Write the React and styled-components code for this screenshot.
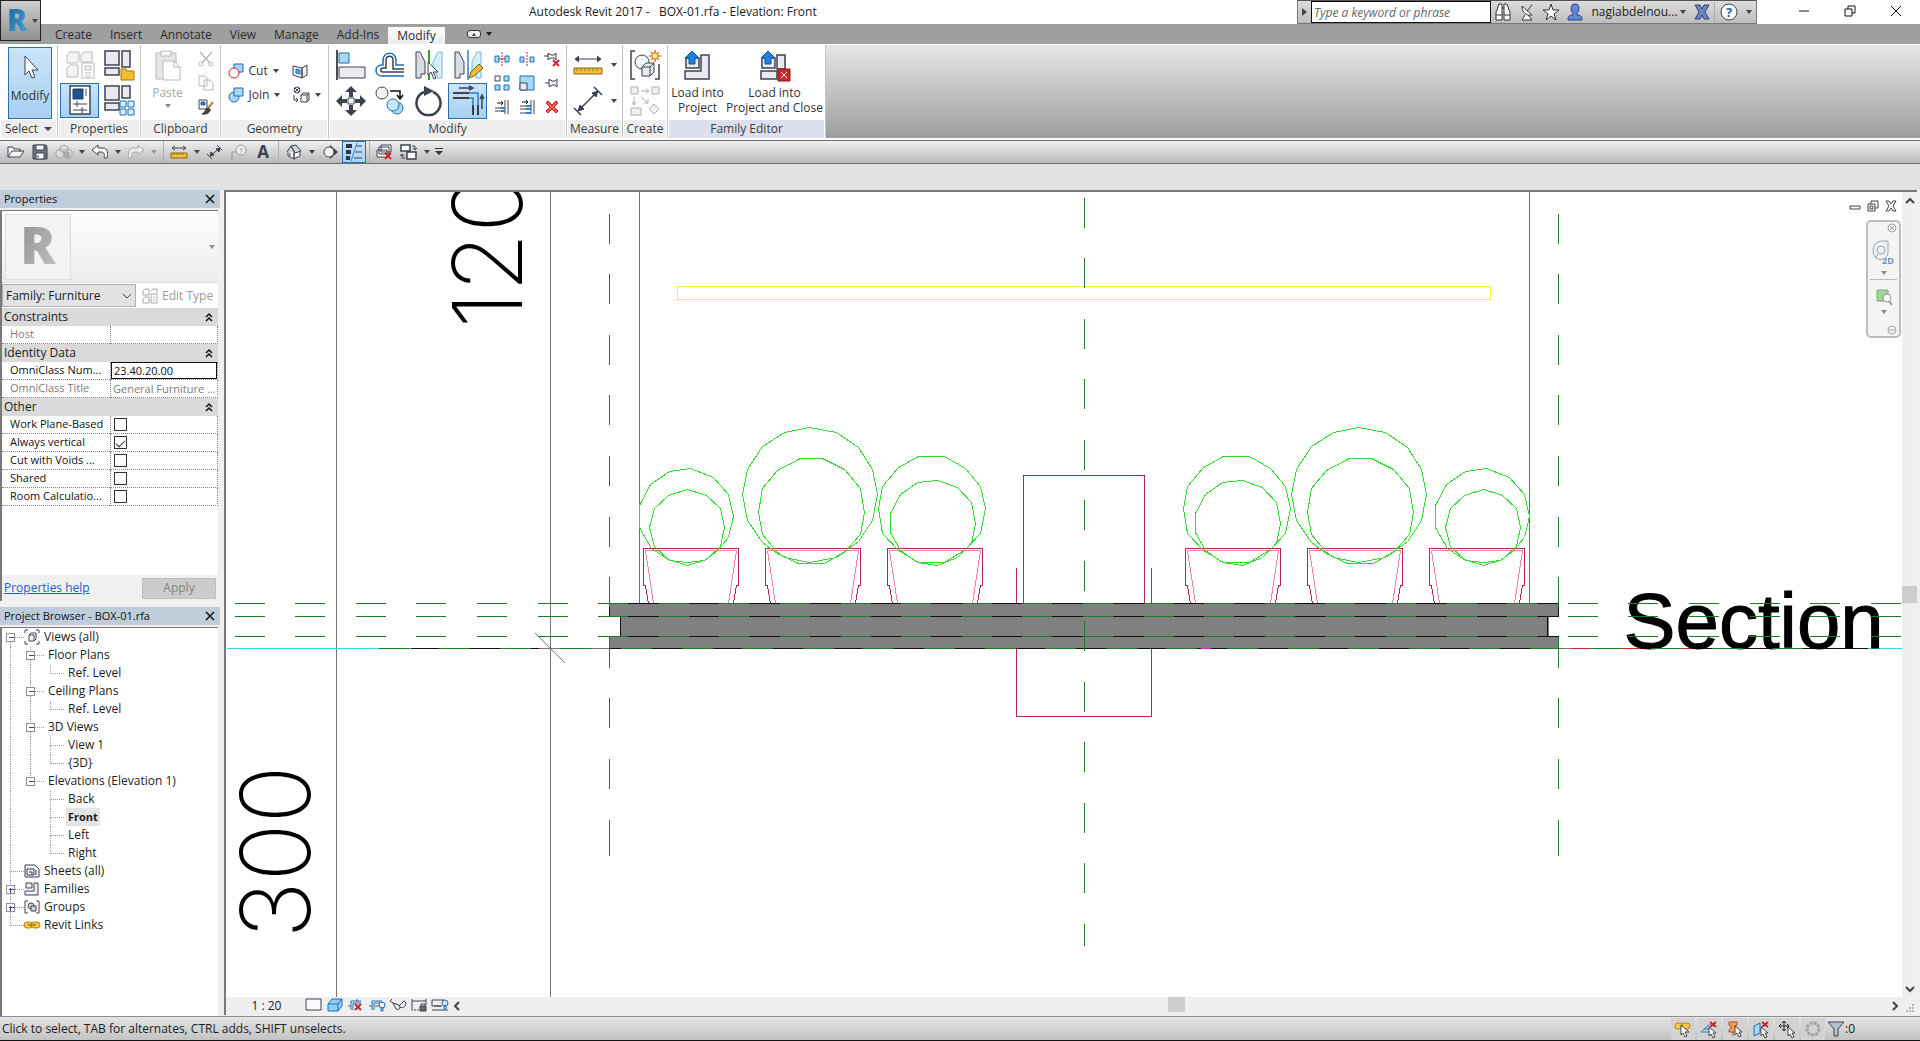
import React from "react";
import styled, { createGlobalStyle, css } from "styled-components";

/* ---------- Icons ---------- */

const INK = "#3c4350";
const BLUE = "#1f6fb8";
const SKY = "#a9d8f5";

const ICONS = {
  cursor: [30, 30, <path d="M10 2v19l4-4 3 7 3-1-3-7h6z" fill="#fff" stroke={INK} />],
  typeProps: [30, 30, (
    <g fill="#f4f4f4" stroke="#b9b9b9">
      <path d="M2 5l3-3h9v9l-3 2H2zM16 5l3-3h8v10H16zM2 18l3-3h8v12H2z" />
      <path d="M17 13h12v15H17z" fill="#fff" />
      <path d="M20 16h6v4h-6zM20 23h6M20 26h6" />
    </g>
  )],
  familyFolder: [30, 30, (
    <g stroke={INK} fill="#e9ebf0">
      <path d="M1 1h14v14H1zM18 1h8v16h-8zM1 18h14v7H1z" strokeWidth="1.5" />
      <path d="M17 19h5l1 2h7v9H17z" fill="#f5bd2c" stroke="#a67610" />
    </g>
  )],
  properties: [24, 30, (
    <g stroke={INK} fill="#fff">
      <path d="M2 1h20v28H2z" strokeWidth="1.5" />
      <path d="M5 4h10v10H5z" fill="#1e528c" stroke="#16406f" />
      <path d="M18 4v7" stroke="#9aa3b0" strokeWidth="2" />
      <path d="M5 19h14M5 25h14M9 16v6M14 22v6" />
    </g>
  )],
  familyTypes: [30, 30, (
    <g stroke={INK} fill="#e9ebf0">
      <path d="M1 1h14v14H1zM18 1h8v12h-8zM1 18h14v7H1z" strokeWidth="1.5" />
      <path d="M16 16h6v6h-6zM24 16h6v6h-6zM16 24h6v6h-6zM24 24h6v6h-6z" fill="#d8effc" stroke={BLUE} />
    </g>
  )],
  paste: [28, 32, (
    <g stroke="#b9b9b9" fill="#e6e6e6">
      <path d="M2 4h20v26H2z" />
      <path d="M7 2h10v5H7z" fill="#f8f8f8" />
      <path d="M9 12h11l6 6v13H9z" fill="#fff" />
      <path d="M20 12v6h6" fill="none" />
    </g>
  )],
  scissors: [16, 16, (
    <g stroke="#b9b9b9" fill="none">
      <path d="M2 1l10 11M14 1L4 12" strokeWidth="1.5" />
      <circle cx="3" cy="13" r="2" /><circle cx="13" cy="13" r="2" />
    </g>
  )],
  copyGrey: [16, 16, (
    <g stroke="#b9b9b9" fill="#fff">
      <path d="M1 1h6l2 2v8H1zM6 5h6l3 3v7H6z" />
    </g>
  )],
  matchType: [16, 16, (
    <g stroke={INK}>
      <path d="M1 1h8v9H1z" fill="#fff" />
      <path d="M3 3h4v3H3z" fill="#2b6cb0" stroke="#2b6cb0" />
      <path d="M15 3l-5 6" stroke="#b28b3d" strokeWidth="2" />
      <path d="M10 9c-3 0-2 4-6 6 5 1 9-2 8-5z" fill="#444" />
    </g>
  )],
  cut: [16, 16, (
    <g>
      <path d="M6 1h9v8H6z" fill={SKY} stroke={BLUE} />
      <circle cx="6" cy="10" r="5" fill="#fff" stroke="#c0272d" />
    </g>
  )],
  join: [16, 16, (
    <g fill={SKY} stroke={BLUE}>
      <circle cx="6" cy="10" r="5" />
      <path d="M6 1h9v8H6z" />
    </g>
  )],
  splitFace: [16, 16, (
    <g stroke={INK} fill="#eef1f6">
      <path d="M1 3l9 2v10l-9-3zM10 5l5-3v10l-5 3z" />
      <path d="M4 6l4 1v4l-4-1z" fill="#5ba4dd" stroke={BLUE} />
    </g>
  )],
  paint: [18, 17, (
    <g stroke={INK} fill="none">
      <circle cx="5" cy="4" r="3" /><path d="M3 2l4 4M7 2L3 6M2 9v5h4M4 12l2 2-2 2" />
      <path d="M9 9l2-2h6v7l-2 2H9zM9 9h6v7M15 9l2-2" fill="#f4f5f8" />
    </g>
  )],
  align: [30, 30, (
    <g>
      <path d="M1 0v30" stroke="#111" strokeWidth="1.5" />
      <path d="M3 3h10v10H3z" fill={SKY} stroke={BLUE} />
      <path d="M3 17h26v11H3z" fill="#e9ebf0" stroke={INK} />
    </g>
  )],
  offset: [30, 28, (
    <g fill="none" strokeWidth="1.5">
      <path d="M29 25H7c-8 0-8-11 0-11h1V9c0-9 13-9 13 0v5h8" stroke={BLUE} />
      <path d="M29 21H8c-3 0-3-4 0-4h3V9c0-5 7-5 7 0v9h11" stroke={INK} />
    </g>
  )],
  mirrorPick: [30, 30, (
    <g>
      <path d="M2 2h4l5 10v12H7v4H2z" fill="#d9dce3" stroke={INK} />
      <path d="M28 2h-4l-5 10v12h4v4h5z" fill="#d6effc" stroke="#7fb4d8" />
      <path d="M15 0v30" stroke="#2ea02e" strokeWidth="2" />
      <path d="M14 12v13l3-3 3 7 2-1-3-6h5z" fill="#fff" stroke={INK} />
    </g>
  )],
  mirrorDraw: [30, 30, (
    <g>
      <path d="M2 2h4l5 10v12H7v4H2z" fill="#d9dce3" stroke={INK} />
      <path d="M28 2h-4l-5 10v12h4v4h5z" fill="#d6effc" stroke="#7fb4d8" />
      <path d="M15 0v30" stroke="#2d7fd0" strokeWidth="1.5" />
      <path d="M16 28l2-6 8-8 4 4-9 8z" fill="#f4be3b" stroke="#7a5510" />
    </g>
  )],
  move: [30, 30, (
    <g fill={INK}>
      <path d="M15 0l6 6h-4v5h-4V6H9zM15 30l6-6h-4v-5h-4v5H9zM0 15l6-6v4h5v4H6v4zM30 15l-6-6v4h-5v4h5v4z" />
      <path d="M12 12h6v6h-6z" fill="#fff" stroke={INK} />
    </g>
  )],
  copy: [30, 30, (
    <g>
      <circle cx="7" cy="7" r="6" fill="#f1f2f5" stroke={INK} />
      <path d="M15 5h10v7M22 9l3 4 3-4" fill="none" stroke="#111" strokeWidth="1.5" />
      <circle cx="22" cy="22" r="6" fill={SKY} stroke={BLUE} />
      <circle cx="18" cy="19" r="6" fill="#c6e7f9" stroke={BLUE} />
    </g>
  )],
  rotate: [30, 30, (
    <g>
      <path d="M19 6A12 12 0 1 1 10 6" fill="none" stroke={INK} strokeWidth="2.5" />
      <path d="M10 0l10 5-10 5z" fill={INK} />
    </g>
  )],
  trim: [32, 30, (
    <g fill="none" strokeWidth="1.5">
      <path d="M1 7h16M1 12h16M21 19v10M26 19v10" stroke="#111" />
      <path d="M17 7h9v12M17 12h4v7" stroke="#2d7fd0" />
      <path d="M7 2h13M17 0l4 2-4 2M30 23V10M28 13l2-4 2 4" stroke={INK} />
    </g>
  )],
  split: [16, 16, (
    <g>
      <path d="M1 5h4v6H1zM11 5h4v6h-4z" fill={SKY} stroke={BLUE} />
      <path d="M8 1v14" stroke="#c0272d" strokeDasharray="2 1" /><path d="M5 8h6" stroke="#c0272d" />
    </g>
  )],
  splitGap: [16, 16, (
    <g>
      <path d="M1 6h4v5H1zM11 6h4v5h-4z" fill={SKY} stroke={BLUE} />
      <path d="M8 1v14" stroke="#c0272d" strokeDasharray="2 1" />
    </g>
  )],
  unpin: [16, 16, (
    <g>
      <path d="M0 5h4M4 2v7M4 3h2l1 1h3l2-2v7l-2-2H7L6 8H4" fill="#f0f0f0" stroke={INK} />
      <path d="M9 9l6 6M15 9l-6 6" stroke="#d0252b" strokeWidth="2" />
    </g>
  )],
  pin: [16, 16, <path d="M1 8h4M5 4v8M5 5h2l1 1h3l2-2v8l-2-2H8l-1 1H5" fill="#f0f0f0" stroke={INK} />],
  array: [16, 16, (
    <g stroke={BLUE} fill={SKY}>
      <path d="M1 1h5v5H1z" fill="#fff" stroke={INK} /><path d="M10 1h5v5h-5zM1 10h5v5H1zM10 10h5v5h-5z" />
    </g>
  )],
  scale: [16, 16, (
    <g>
      <path d="M1 1h14v14H1z" fill={SKY} stroke={BLUE} /><path d="M1 8h7v7H1z" fill="#eceef2" stroke={INK} />
    </g>
  )],
  trimOne: [16, 16, (
    <g fill="none">
      <path d="M11 1v14M14 1v14M1 9h6M1 12h6" stroke={INK} /><path d="M7 9h4M7 12h4" stroke="#2d7fd0" strokeWidth="2" />
      <path d="M3 4h6M7 2l2 2-2 2" stroke="#111" />
    </g>
  )],
  trimMany: [16, 16, (
    <g fill="none">
      <path d="M12 1v14M15 1v14M1 7h6M1 10h6M1 14h6" stroke={INK} /><path d="M7 7h5M7 10h5M7 14h5" stroke="#2d7fd0" strokeWidth="2" />
      <path d="M3 3h6M7 1l2 2-2 2" stroke="#111" />
    </g>
  )],
  remove: [16, 16, <path d="M2 4l2-2 4 4 4-4 2 2-4 4 4 4-2 2-4-4-4 4-2-2 4-4z" fill="#f2604a" stroke="#b81f1f" />],
  measure: [30, 28, (
    <g>
      <path d="M3 8h24M6 5L2 8l4 3M24 5l4 3-4 3" stroke={INK} fill={INK} />
      <path d="M1 17h28v6H1z" fill="#f4be3b" stroke="#8c6512" />
      <path d="M4 17v3M8 17v3M12 17v3M16 17v3M20 17v3M24 17v3" stroke="#8c6512" />
    </g>
  )],
  dimension: [30, 30, (
    <g stroke={INK} fill={INK}>
      <path d="M6 24L24 6M1 22l7 7M21 1l8 8" strokeWidth="1.5" /><path d="M5 25l2-6 4 4zM25 5l-6 2 4 4z" />
    </g>
  )],
  group: [30, 30, (
    <g stroke={INK} fill="none">
      <path d="M5 1H1v28h4M25 29h4V14" strokeWidth="1.5" />
      <circle cx="12" cy="12" r="7" fill="#f4f5f8" />
      <path d="M12 17l4-4h8v9l-4 4h-8zM12 17h8v9M20 17l4-4" fill="#e9ebf0" />
      <path d="M25 0v12M19 6h12M21 2l8 8M29 2l-8 8" stroke="#e8731a" strokeWidth="1.5" />
      <circle cx="25" cy="6" r="3" fill="#fff3a8" stroke="#e8731a" />
    </g>
  )],
  similar: [30, 30, (
    <g stroke="#b0b0b0" fill="#f1f1f1">
      <path d="M1 1h7v7H1zM22 1h7v7h-7zM1 22h10v7H1zM24 18l5 5-5 5-5-5z" />
      <path d="M11 5h8M16 3l3 2-3 2M4 11v8M2 16l2 3 2-3M11 11l7 6M18 13v4h-4" fill="none" />
    </g>
  )],
  load: [30, 30, (
    <g stroke={INK} fill="#e9ebf0">
      <path d="M3 7h13v10H3zM18 4h8v24H2v-8h16z" strokeWidth="1.5" />
      <path d="M9 0l7 7h-4v6H6V7H2z" fill="#1d7fe0" stroke="#1459a4" />
    </g>
  )],
  loadClose: [32, 30, (
    <g stroke={INK} fill="#e9ebf0">
      <path d="M3 7h13v10H3zM18 4h8v14h-8zM2 20h16v8H2z" strokeWidth="1.5" />
      <path d="M9 0l7 7h-4v6H6V7H2z" fill="#1d7fe0" stroke="#1459a4" />
      <path d="M19 18h12v12H19z" fill="#cf2a2a" stroke="#8d1717" /><path d="M22 21l6 6M28 21l-6 6" stroke="#fff" />
    </g>
  )],
  open: [18, 16, <path d="M1 13V3h5l1 2h6v3M1 13l4-6h12l-4 6z" fill="#f6f7f9" stroke={INK} />],
  save: [16, 16, (
    <g stroke={INK}>
      <path d="M1 1h13l1 2v12H1z" fill="#6c7584" /><path d="M4 1h8v5H4z" fill="#fff" /><path d="M4 9h8v6H4z" fill="#fff" /><path d="M6 11v3" />
    </g>
  )],
  cubes: [18, 16, (
    <g stroke="#a6a6a6" fill="#dedede">
      <path d="M5 3l4-2 4 2v4l-4 2-4-2zM1 7l4-2 4 2v5l-4 2-4-2zM9 7l4-2 4 2v5l-4 3-4-3z" /><circle cx="12" cy="11" r="3" fill="#aaa" />
    </g>
  )],
  undo: [18, 16, <path d="M1 6l6-5v3h5c5 0 5 6 4 10h-3c1-4 0-6-3-6H7v3z" fill="#fff" stroke={INK} />],
  redo: [18, 16, <path d="M17 6l-6-5v3H6C1 4 1 10 2 14h3c-1-4 0-6 3-6h3v3z" fill="#ededed" stroke="#a8a8a8" />],
  ruler: [18, 16, (
    <g>
      <path d="M3 4h12M5 2L2 4l3 2M13 2l3 2-3 2" stroke={INK} fill="none" /><path d="M1 9h16v5H1z" fill="#f4be3b" stroke="#8c6512" />
      <path d="M4 9v2M7 9v2M10 9v2M13 9v2" stroke="#8c6512" />
    </g>
  )],
  aligned: [18, 16, <path d="M4 12L14 4M1 10l5 5M11 1l5 5M4 12l1-4 3 3zM14 4l-1 4-3-3z" fill={INK} stroke={INK} />],
  tag: [18, 16, (
    <g stroke="#9a9a9a" fill="none">
      <path d="M2 15V8h6" /><circle cx="2" cy="14" r="1" /><circle cx="11" cy="6" r="5" fill="#eee" />
      <text x="11" y="9" fontSize="8" textAnchor="middle" fill="#888" stroke="none">1</text>
    </g>
  )],
  textA: [16, 16, <text x="8" y="14" fontSize="17" fontWeight="700" textAnchor="middle" fill={INK}>A</text>],
  house: [18, 16, (
    <g stroke={INK} fill="#f4f5f8">
      <path d="M3 7v5l6 3V8L6 3zM9 8v7l6-3V7z" />
      <path d="M2 8l4-6 4 7M6 2l5-1 5 6-6 2z" fill="#cfd4dc" />
      <path d="M5 9v3" />
    </g>
  )],
  sectionMark: [16, 16, (
    <g><path d="M8 1l8 7-8 7z" fill={INK} /><circle cx="7" cy="8" r="5" fill="#f4f4f4" stroke={INK} /></g>
  )],
  thinLines: [18, 18, (
    <g>
      <path d="M1 3h6M1 9h5M1 15h4" stroke="#2b3647" strokeWidth="4" /><path d="M11 3h6M10 9h7M9 15h8" stroke={INK} />
      <path d="M12 0L6 18" stroke="#2d8be0" />
    </g>
  )],
  closeHidden: [18, 16, (
    <g stroke={INK} fill="#fff">
      <path d="M5 1h10v7H5zM3 3h10v7H3zM1 6h10v7H1z" /><path d="M9 9l6 6M15 9l-6 6" stroke="#d0252b" strokeWidth="2" />
    </g>
  )],
  switchWin: [18, 16, (
    <g stroke={INK} fill="#fff">
      <path d="M1 1h9v6H1zM7 8h9v7H7z" strokeWidth="1.5" /><path d="M12 2h3v4M13 4l2 2 2-2M5 14H2v-4M0 12l2-2 2 2" fill="none" />
    </g>
  )],
  customize: [8, 8, <path d="M0 0h8v1H0zM0 3h8L4 7z" fill="#333" />],
  binoculars: [16, 18, (
    <path d="M2 7l2-6h3v16H1V9zM14 7l-2-6H9v16h6V9zM7 5h2M1 12h6M9 12h6" fill="#fff" stroke="#333" />
  )],
  dish: [14, 18, (
    <path d="M2 3c0 7 5 10 10 9zM7 8l5-6M12 2l-1 0M5 12l-3 5h10l-4-5" fill="#fff" stroke="#333" />
  )],
  star: [18, 18, <path d="M9 1l2 6h6l-5 4 2 6-5-4-5 4 2-6-5-4h6z" fill="#fff" stroke="#333" />],
  user: [16, 18, (
    <path d="M8 1c-6 0-4 8-2 9v2c-3 0-5 1-5 5h14c0-4-2-5-5-5v-2c2-1 4-9-2-9z" fill="#5f86d8" stroke="#26407e" />
  )],
  exchange: [16, 16, (
    <path d="M1 1h5l2 4 2-4h5l-4 7 4 7h-5l-2-4-2 4H1l4-7z" fill="#6c87be" stroke="#27427c" />
  )],
  help: [18, 18, (
    <g>
      <circle cx="9" cy="9" r="8" fill="#fff" stroke="#444" />
      <text x="9" y="14" fontSize="13" fontWeight="700" textAnchor="middle" fill="#2f5cb4">?</text>
    </g>
  )],
  minimize: [12, 12, <path d="M1 6h10" stroke="#111" />],
  restore: [12, 12, <path d="M1 4h7v7H1zM4 4V1h7v7H8" fill="none" stroke="#111" />],
  close: [12, 12, <path d="M1 1l10 10M11 1L1 11" stroke="#111" />],
  closeBold: [10, 10, <path d="M1 1l8 8M9 1L1 9" stroke="#111" strokeWidth="1.5" />],
  viewMin: [12, 12, <path d="M1 6h10v3H1z" fill="#fff" stroke="#444" />],
  viewRestore: [12, 12, <path d="M1 4h7v7H1zM4 4V1h7v7H8M3 6h3v3H3z" fill="none" stroke="#444" />],
  viewClose: [12, 12, <path d="M1 1h3l2 3 2-3h3L8 6l3 5H8L6 8l-2 3H1l3-5z" fill="#fff" stroke="#444" />],
  wheel: [24, 28, (
    <g fill="#eef0f4" stroke="#9aa2b4">
      <path d="M1 12a9 9 0 0 1 9-10h6v10a8 8 0 0 1-6 9 9 9 0 0 1-9-9z" /><circle cx="9" cy="11" r="4" />
      <path d="M6 15l-3 4" />
      <text x="16" y="25" fontSize="9" fontWeight="700" textAnchor="middle" fill="#6f92cc" stroke="none">2D</text>
    </g>
  )],
  zoomRegion: [18, 18, (
    <g><path d="M2 2h11v11H2z" fill="#a5d29a" stroke="#7cae72" /><circle cx="12" cy="10" r="4" fill="#fff" stroke="#8a93a5" /><path d="M14 13l3 4" stroke="#8a93a5" strokeWidth="1.5" /></g>
  )],
  navClose: [10, 10, <g fill="none" stroke="#a5a5a5"><circle cx="5" cy="5" r="4" /><path d="M3 3l4 4M7 3L3 7" /></g>],
  navMenu: [10, 10, <g fill="none" stroke="#a5a5a5"><circle cx="5" cy="5" r="4" /><path d="M2 5h6" /></g>],
  collapse: [10, 12, <path d="M2 6l3-3 3 3M2 10l3-3 3 3" fill="none" stroke="#111" strokeWidth="1.5" />],
  views: [16, 16, (
    <g fill="none" stroke={INK}><path d="M4 1H1v3M12 1h3v3M1 12v3h3M15 12v3h-3M5 6l2-2h5v6l-2 2H5zM5 6h5v6" /></g>
  )],
  sheets: [16, 14, (
    <g fill="#eef0f5" stroke={INK}><path d="M1 1h10l4 4v8H1z" /><path d="M3 5h7v6H3zM5 8h3v3M12 6v5" fill="none" /></g>
  )],
  families: [16, 14, <path d="M2 1h6v5H2zM10 1h4v12H1V9h9z" fill="#eef0f5" stroke={INK} />],
  groups: [16, 14, (
    <g fill="#cfd3dc" stroke={INK}><path d="M4 1H1v12h3M12 1h3v12h-3" fill="none" /><circle cx="7" cy="6" r="3" /><path d="M7 6h5v5H7z" /></g>
  )],
  links: [18, 10, (
    <g fill="none" stroke="#b8860b"><rect x="1" y="2" width="9" height="6" rx="3" fill="#f5c842" /><rect x="8" y="2" width="9" height="6" rx="3" fill="#f5c842" /><path d="M5 5h8" stroke="#7c5a06" /></g>
  )],
  detail: [18, 14, <path d="M1 1h15v11H1z" fill="#fbfbfd" stroke={INK} />],
  visual: [16, 14, <path d="M1 6l4-5h10v7l-4 5H1zM1 6h10v7M11 6l4-5" fill="#8fcdf2" stroke={BLUE} />],
  cropOff: [18, 14, (
    <g fill="none"><path d="M1 8h3M4 12V3h10M6 12V5h8M10 1v3" stroke={BLUE} /><path d="M8 6l6 6M14 6l-6 6" stroke="#c0272d" strokeWidth="2" /></g>
  )],
  cropShow: [18, 14, (
    <g fill="none"><path d="M1 8h3M4 12V3h10M6 12V5h6" stroke={BLUE} /><circle cx="14" cy="7" r="3" fill="#e6f3fc" stroke={BLUE} /><path d="M13 10h2v3h-2z" stroke={BLUE} /><path d="M7 8h4" stroke="#c0272d" /></g>
  )],
  glasses: [18, 14, <path d="M1 3l3 2 3 6c4 2 5-3 3-4L4 5M10 8l5-5c3 1 2 5 0 6s-4 1-5-1M1 3l2-2" fill="none" stroke={INK} />],
  constraints: [18, 14, (
    <g fill="none" stroke={INK}><path d="M2 1v12M16 1v6M2 3h14" /><path d="M4 12h6" strokeDasharray="2 1" /><path d="M10 8h6v5h-6z" fill="#666" /><path d="M11 8V6h4v2" /></g>
  )],
  worksheet: [18, 14, (
    <g fill="none" stroke={INK}><path d="M1 2h12M1 2v6h10M1 12h16" /><path d="M3 8h7" /><circle cx="14" cy="5" r="3" fill="#cfe6f7" stroke={BLUE} /><path d="M13 8h2v3h-2z" stroke={BLUE} /></g>
  )],
  selLinks: [18, 18, (
    <g><rect x="1" y="3" width="8" height="6" rx="3" fill="#f5c842" stroke="#b8860b" /><rect x="8" y="3" width="8" height="6" rx="3" fill="#f5c842" stroke="#b8860b" /><path d="M7 5v10l2-2 2 4 2-1-2-4h4z" fill="#fff" stroke={INK} /></g>
  )],
  selUnderlay: [18, 18, (
    <g><path d="M1 12L10 4M1 12h10M4 9h7" stroke="#2d7fd0" fill="none" /><path d="M10 2l6 5M16 2l-6 5" stroke="#c0272d" strokeWidth="2" /><path d="M9 7v9l2-2 2 4 2-1-2-4h3z" fill="#fff" stroke={INK} /></g>
  )],
  selPinned: [18, 18, (
    <g><path d="M3 2h8v3l-2 1v2l2 2v2H3v-2l2-2V6L3 5zM7 12v4" fill="#f6a04d" stroke="#b0481a" /><path d="M9 6v9l2-2 2 4 2-1-2-4h3z" fill="#fff" stroke={INK} /></g>
  )],
  selFace: [18, 18, (
    <g><path d="M2 6l6-3v10l-6 3z" fill={SKY} stroke={BLUE} /><path d="M10 2l6 5M16 2l-6 5" stroke="#c0272d" strokeWidth="2" /><path d="M9 7v9l2-2 2 4 2-1-2-4h3z" fill="#fff" stroke={INK} /></g>
  )],
  dragSel: [18, 18, (
    <g><path d="M6 1v10M1 6h10M4 3l2-2 2 2M4 9l2 2 2-2M3 4L1 6l2 2M9 4l2 2-2 2" stroke="#222" fill="none" /><path d="M10 7v9l2-2 2 4 2-1-2-4h3z" fill="#fff" stroke={INK} /></g>
  )],
  progress: [18, 18, <circle cx="9" cy="9" r="6" fill="none" stroke="#a3a3a3" strokeWidth="3" strokeDasharray="3 1" />],
  filter: [18, 18, <path d="M1 2h16l-6 7v7H7V9z" fill="#b8bfcc" stroke={INK} />],
};

function Icon({ name, label }) {
  const [w, h, shape] = ICONS[name];
  return (
    <svg width={w} height={h} viewBox={`0 0 ${w} ${h}`} fill="none" role={label ? "img" : undefined} aria-label={label}>
      {shape}
    </svg>
  );
}

/* ---------- Base ---------- */

const GlobalStyle = createGlobalStyle`
  * { box-sizing: border-box; }
  body {
    margin: 0;
    overflow: hidden;
    background: #f0f0f0;
    color: #1c1c1c;
    font: 12px/18px "Open Sans", "Noto Sans", sans-serif;
  }
  button, input, select { font: inherit; color: inherit; }
  svg { display: block; flex: none; overflow: visible; }
`;

const Window = styled.div`
  display: flex;
  flex-direction: column;
  height: 100vh;
`;

const PlainButton = styled.button`
  display: flex;
  align-items: center;
  justify-content: center;
  border: 0;
  padding: 0;
  background: none;
`;

const Caret = styled.span`
  width: 0;
  height: 0;
  border: ${(p) => (p.$large ? 4 : 3)}px solid transparent;
  border-top: 4px solid ${(p) => p.$color || "#444"};
  border-bottom: 0;
`;

/* ---------- Title bar ---------- */

const TitleBar = styled.header`
  position: relative;
  display: flex;
  justify-content: flex-end;
  height: 24px;
  background: #fff;
`;

const AppButton = styled(PlainButton)`
  position: absolute;
  z-index: 2;
  top: 0;
  left: 0;
  width: 41px;
  height: 41px;
  border: 1px solid #222;
  background: linear-gradient(#cfcfcf, #8f8f8f);
  gap: 2px;
`;

const Title = styled.h1`
  flex: 1;
  margin: 0;
  padding-left: 529px;
  font-size: 12px;
  font-weight: 400;
  line-height: 24px;
  white-space: pre;
`;

const InfoCenter = styled.div`
  display: flex;
  align-items: center;
  width: 460px;
  border: 1px solid #777;
  border-top-color: #555;
  background: linear-gradient(#dcdcdc, #bdbdbd);
`;

const InfoToggle = styled(PlainButton)`
  width: 13px;
  height: 22px;
`;

const RightArrow = styled.span`
  border: 4px solid transparent;
  border-left: 5px solid #444;
  border-right: 0;
`;

const Search = styled.input`
  width: 180px;
  height: 22px;
  border: 1px solid #111;
  padding: 0 2px;
  background: #fff;
  &::placeholder {
    color: #666;
    font-style: italic;
    opacity: 1;
  }
`;

const InfoButton = styled(PlainButton)`
  width: 24px;
  height: 22px;
`;

const UserName = styled(PlainButton)`
  flex: 1;
  gap: 2px;
  white-space: nowrap;
`;

const InfoHelp = styled(PlainButton)`
  width: 42px;
  height: 20px;
  gap: 8px;
  border-left: 1px solid #aaa;
`;

const WindowButtons = styled.div`
  display: flex;
  width: 163px;
  padding-left: 24px;
`;

const WindowButton = styled(PlainButton)`
  width: 46px;
  height: 22px;
`;

/* ---------- Ribbon ---------- */

const TabBar = styled.nav`
  display: flex;
  align-items: flex-end;
  height: 20px;
  padding-left: 46px;
  background: #9f9f9f;
`;

const Tab = styled.button`
  height: ${(p) => (p.$active ? 17 : 20)}px;
  padding: 0 9px;
  border: 0;
  background: ${(p) => (p.$active ? "linear-gradient(#fdfdfd, #ececec)" : "none")};
  font-size: 12px;
  line-height: ${(p) => (p.$active ? 17 : 22)}px;
  color: #2a2a2a;
`;

const RibbonToggle = styled(PlainButton)`
  height: 20px;
  margin-left: 22px;
  gap: 5px;
`;

const TogglePill = styled.span`
  width: 14px;
  height: 8px;
  border: 1px solid #333;
  border-radius: 3px;
  background: #eee;
  display: grid;
  place-items: center;
  &::after {
    content: "";
    border: 2px solid transparent;
    border-bottom: 3px solid #333;
    border-top: 0;
  }
`;

const Ribbon = styled.div`
  display: flex;
  height: 96px;
  border-top: 1px solid #fff;
  border-bottom: 2px solid #fff;
  background: linear-gradient(#e6e6e6, #9e9e9e);
`;

const Panel = styled.section`
  display: flex;
  flex-direction: column;
  width: ${(p) => p.$width}px;
  border-right: 1px solid #c4c4c4;
  background: #fff;
`;

const PanelBody = styled.div`
  flex: 1;
  display: flex;
  align-items: center;
  justify-content: center;
  gap: ${(p) => p.$gap || 0}px;
  padding-left: ${(p) => p.$pad || 0}px;
`;

const PanelTitle = styled.h2`
  display: flex;
  align-items: center;
  justify-content: center;
  gap: 6px;
  height: 18px;
  margin: 0 1px;
  background: ${(p) => (p.$accent ? "#dcdfef" : "#eeeeee")};
  font-size: 12px;
  font-weight: 400;
  line-height: 18px;
  color: #3b3b3b;
`;

const active = css`
  border: 1px solid #2a6fb5;
  background: linear-gradient(#cbe4f8, #a8d0f2);
`;

const BigButton = styled(PlainButton)`
  flex-direction: column;
  justify-content: flex-start;
  width: ${(p) => p.$width}px;
  height: 72px;
  padding-top: ${(p) => p.$top || 4}px;
  gap: 4px;
  line-height: 15px;
  white-space: nowrap;
  color: ${(p) => (p.$dim ? "#a8a8a8" : "#333")};
  ${(p) => p.$active && active}
`;

const ToolGrid = styled.div`
  display: grid;
  grid-template-columns: repeat(${(p) => p.$cols}, ${(p) => p.$cell}px);
  grid-auto-rows: ${(p) => p.$row}px;
`;

const Tool = styled(PlainButton)`
  ${(p) => p.$active && active}
`;

const TextTool = styled(PlainButton)`
  justify-content: flex-start;
  gap: 5px;
  color: #333;
`;

const BigTool = styled(PlainButton)`
  gap: 8px;
`;

/* ---------- Quick access + options bar ---------- */

const QuickBar = styled.div`
  display: flex;
  align-items: center;
  height: 24px;
  padding-left: 4px;
  border-top: 1px solid #6d6d6d;
  border-bottom: 1px solid #6d6d6d;
  background: linear-gradient(#f0f0f0, #b8b8b8);
`;

const QuickButton = styled(PlainButton)`
  width: 24px;
  height: 22px;
  ${(p) => p.$active && active}
`;

const QuickCaret = styled(PlainButton)`
  width: 12px;
  height: 22px;
`;

const QuickSep = styled.span`
  width: 1px;
  height: 22px;
  margin: 0 3px;
  background: #b0b0b0;
`;

const OptionsBar = styled.div`
  height: 26px;
  background: #e0e1e3;
`;

/* ---------- Palettes ---------- */

const Workspace = styled.main`
  flex: 1;
  display: flex;
  gap: 4px;
  min-height: 0;
  background: #f0f0f0;
`;

const Sidebar = styled.aside`
  display: flex;
  flex-direction: column;
  width: 220px;
  gap: 6px;
`;

const Palette = styled.section`
  display: flex;
  flex-direction: column;
  ${(p) => p.$grow && "flex: 1; min-height: 0;"}
`;

const PaletteHeader = styled.header`
  display: flex;
  align-items: center;
  justify-content: space-between;
  height: 18px;
  padding: 0 5px 0 4px;
  margin-bottom: 2px;
  background: #bfcddb;
  color: #111;
`;

const PaletteTitle = styled.h2`
  margin: 0;
  font-size: 11px;
  font-weight: 400;
`;

const PaletteFrame = styled.div`
  flex: 1;
  display: flex;
  flex-direction: column;
  min-height: 0;
  margin-right: 2px;
  border-left: 2px solid #7a7a7a;
  border-top: 1px solid #7a7a7a;
  background: #fff;
`;

const TypePicker = styled.button`
  display: flex;
  align-items: center;
  justify-content: space-between;
  height: 72px;
  padding: 3px;
  border: 0;
  border-bottom: 1px solid #ddd;
  background: linear-gradient(#fdfdfd, #ececec);
`;

const TypeImage = styled.span`
  display: grid;
  place-items: center;
  width: 66px;
  height: 66px;
  border: 1px solid #ddd;
  background: #f3f3f3;
`;

const TypeRow = styled.div`
  display: flex;
  align-items: center;
  height: 25px;
  gap: 6px;
`;

const SelectBox = styled.div`
  display: grid;
  align-items: center;
  width: 134px;
  height: 23px;
  border: 1px solid #adadad;
  background: #e2e2e2;
  > * { grid-area: 1 / 1; }
  > svg {
    justify-self: end;
    margin-right: 4px;
    pointer-events: none;
  }
`;

const FamilySelect = styled.select`
  appearance: none;
  width: 100%;
  padding: 0 20px 0 3px;
  border: 0;
  background: none;
  font-size: 12px;
`;

const EditType = styled(PlainButton)`
  gap: 4px;
  color: #9a9a9a;
  white-space: nowrap;
`;

const PropBody = styled.div`
  height: 267px;
`;

const GroupHeader = styled.h3`
  display: flex;
  align-items: center;
  justify-content: space-between;
  height: 18px;
  margin: 0;
  padding: 0 4px 0 2px;
  background: #dadada;
  font-size: 12px;
  font-weight: 400;
`;

const PropRow = styled.div`
  display: grid;
  grid-template-columns: 108px 1fr;
  height: 18px;
  font-size: 11px;
  line-height: 16px;
  color: ${(p) => (p.$dim ? "#7d7d7d" : "#111")};
`;

const PropLabel = styled.label`
  padding-left: 8px;
  border-bottom: 1px dotted #888;
  white-space: nowrap;
`;

const PropValue = styled.div`
  display: flex;
  align-items: center;
  min-width: 0;
  border: 1px dotted #888;
  border-top: 0;
`;

const ValueInput = styled.input`
  width: 100%;
  height: 17px;
  padding: 0 2px;
  border: ${(p) => (p.$active ? "1px solid #111" : "0")};
  background: #fff;
`;

const Check = styled.input`
  appearance: none;
  display: grid;
  place-items: center;
  width: 13px;
  height: 13px;
  margin: 0 0 0 3px;
  border: 1px solid #333;
  background: #fff;
  &:checked::after {
    content: "";
    width: 8px;
    height: 4px;
    border: solid #333;
    border-width: 0 0 1px 1px;
    transform: rotate(-45deg);
  }
`;

const PaletteFooter = styled.footer`
  display: flex;
  align-items: center;
  justify-content: space-between;
  height: 26px;
  margin-top: auto;
  padding: 0 2px;
  background: #f0f0f0;
`;

const HelpLink = styled.a`
  color: #1f5fbf;
`;

const ApplyButton = styled.button`
  width: 74px;
  height: 21px;
  padding: 0;
  border: 1px solid #bfbfbf;
  background: #cccccc;
  color: #838383;
`;

/* ---------- Project browser ---------- */

const TreeList = styled.ul`
  margin: 0;
  padding: 0;
  list-style: none;
`;

const TreeRow = styled.li`
  display: flex;
  align-items: center;
  height: 18px;
`;

const TreeLabel = styled.span`
  padding: 0 2px;
  margin-left: ${(p) => p.$gap}px;
  background: ${(p) => (p.$current ? "#e3e3e3" : "none")};
  font-weight: ${(p) => (p.$current ? 700 : 400)};
  font-size: ${(p) => (p.$current ? 11 : 12)}px;
  white-space: nowrap;
`;

const TreeIcon = styled.span`
  display: grid;
  place-items: center;
  width: 20px;
`;

/* ---------- View ---------- */

const ViewFrame = styled.section`
  flex: 1;
  display: grid;
  grid-template-columns: minmax(0, 1fr) 15px;
  grid-template-rows: minmax(0, 1fr) 18px;
  margin: 0 3px 1px 0;
  border-top: 2px solid #7a7a7a;
  border-left: 2px solid #7a7a7a;
  background: #efefef;
`;

const Canvas = styled.div`
  position: relative;
  min-height: 0;
  overflow: hidden;
  background: #fff;
  > svg {
    width: 100%;
    height: 100%;
    overflow: hidden;
  }
`;

const ViewButtons = styled.div`
  position: absolute;
  top: 8px;
  right: 3px;
  display: flex;
  gap: 1px;
`;

const ViewButton = styled(PlainButton)`
  width: 17px;
  height: 12px;
`;

const NavBar = styled.div`
  position: absolute;
  top: 28px;
  right: 1px;
  display: flex;
  flex-direction: column;
  align-items: center;
  width: 35px;
  height: 118px;
  padding: 0 2px;
  border: 2px solid #bdbdbd;
  border-radius: 5px;
  background: #f4f4f4;
`;

const NavCorner = styled(PlainButton)`
  align-self: flex-end;
  height: 12px;
  margin-top: ${(p) => (p.$last ? "auto" : 0)};
`;

const NavTool = styled(PlainButton)`
  flex-direction: column;
  width: 100%;
  height: ${(p) => p.$height}px;
  gap: 4px;
  border-bottom: ${(p) => (p.$line ? "1px solid #bdbdbd" : "0")};
`;

const VScroll = styled.div`
  display: flex;
  flex-direction: column;
  align-items: center;
  background: #efefef;
`;

const HScroll = styled.div`
  display: flex;
  align-items: flex-start;
  background: #efefef;
`;

const ScrollButton = styled(PlainButton)`
  width: 15px;
  height: 16px;
`;

const Track = styled.div`
  flex: ${(p) => p.$grow};
`;

const VThumb = styled.div`
  width: 15px;
  height: 17px;
  background: #cdcdcd;
`;

const HThumb = styled(VThumb)`
  width: 17px;
  height: 15px;
`;

const ScaleButton = styled(PlainButton)`
  width: 77px;
  height: 18px;
  padding-left: 4px;
`;

const ViewTool = styled(PlainButton)`
  width: 21px;
  height: 16px;
`;

const Grip = styled.span`
  align-self: end;
  justify-self: end;
  padding: 2px;
`;

/* ---------- Status bar ---------- */

const StatusBar = styled.footer`
  display: flex;
  align-items: center;
  height: 25px;
  padding: 0 65px 0 2px;
  border-top: 1px solid #8c8c8c;
  border-bottom: 1px solid #111;
  background: linear-gradient(#e4e4e4, #c2c2c2);
`;

const StatusText = styled.p`
  flex: 1;
  margin: 0;
`;

const StatusTool = styled(PlainButton)`
  width: ${(p) => (p.$flat ? 18 : 24)}px;
  height: 22px;
  margin-left: 2px;
  background: ${(p) => (p.$flat ? "none" : "#d2d2d2")};
`;

/* ---------- Data ---------- */

const TABS = ["Create", "Insert", "Annotate", "View", "Manage", "Add-Ins", "Modify"];

const QUICK = [
  "open", "save", "cubes", "caret", "undo", "caret", "redo", "caretDim", "sep",
  "ruler", "caret", "aligned", "tag", "textA", "sep",
  "house", "caret", "sectionMark", "thinLines", "sep", "closeHidden", "switchWin", "caret",
];

const MODIFY_LARGE = ["align", "offset", "mirrorPick", "mirrorDraw", "move", "copy", "rotate", "trim"];
const MODIFY_SMALL = ["split", "splitGap", "unpin", "array", "scale", "pin", "trimOne", "trimMany", "remove"];

const PROPERTY_GROUPS = [
  { title: "Constraints", rows: [{ id: "host", label: "Host", value: "", dim: true }] },
  {
    title: "Identity Data",
    rows: [
      { id: "omni-number", label: "OmniClass Num...", value: "23.40.20.00", active: true },
      { id: "omni-title", label: "OmniClass Title", value: "General Furniture ...", dim: true },
    ],
  },
  {
    title: "Other",
    rows: [
      { id: "work-plane", label: "Work Plane-Based", check: true, checked: false },
      { id: "vertical", label: "Always vertical", check: true, checked: true },
      { id: "voids", label: "Cut with Voids ...", check: true, checked: false },
      { id: "shared", label: "Shared", check: true, checked: false },
      { id: "room", label: "Room Calculatio...", check: true, checked: false },
    ],
  },
];

// each guide entry fills one 20px column in front of the label
const TREE = [
  { guides: ["minusTop"], icon: "views", label: "Views (all)" },
  { guides: ["line", "minus"], label: "Floor Plans" },
  { guides: ["line", "line", "elbow"], label: "Ref. Level" },
  { guides: ["line", "minus"], label: "Ceiling Plans" },
  { guides: ["line", "line", "elbow"], label: "Ref. Level" },
  { guides: ["line", "minus"], label: "3D Views" },
  { guides: ["line", "line", "tee"], label: "View 1" },
  { guides: ["line", "line", "elbow"], label: "{3D}" },
  { guides: ["line", "minusEnd"], label: "Elevations (Elevation 1)" },
  { guides: ["line", "none", "tee"], label: "Back" },
  { guides: ["line", "none", "tee"], label: "Front", current: true },
  { guides: ["line", "none", "tee"], label: "Left" },
  { guides: ["line", "none", "elbow"], label: "Right" },
  { guides: ["tee"], icon: "sheets", label: "Sheets (all)" },
  { guides: ["plus"], icon: "families", label: "Families" },
  { guides: ["plus"], icon: "groups", label: "Groups" },
  { guides: ["elbow"], icon: "links", label: "Revit Links" },
];

const VIEW_TOOLS = ["detail", "visual", "cropOff", "cropShow", "glasses", "constraints", "worksheet"];
const STATUS_TOOLS = ["selLinks", "selUnderlay", "selPinned", "selFace", "dragSel", "progress"];

/* ---------- Pieces ---------- */

function Guide({ type }) {
  const box = type.startsWith("minus") || type === "plus";
  const up = type !== "minusTop" && type !== "none";
  const down = type !== "minusEnd" && type !== "elbow" && type !== "none";
  return (
    <svg width="20" height="18" shapeRendering="crispEdges" fill="none">
      <g stroke="#9a9a9a" strokeDasharray="1 1" transform="translate(-1.5 .5)">
        {up && <path d="M10 0v9" />}
        {down && <path d="M10 9v9" />}
        {type !== "line" && type !== "none" && <path d="M10 9h13" />}
      </g>
      {box && (
        <g transform="translate(.5 .5)">
          <path d="M4 5h8v8H4z" fill="#fff" stroke="#919191" />
          <path d={type === "plus" ? "M6 9h5M8 7v5" : "M6 9h5"} stroke="#33508a" />
        </g>
      )}
    </svg>
  );
}

function RevitMark({ size, from, to }) {
  const id = `mark${size}`;
  return (
    <svg width={size} height={size} viewBox="0 0 30 30">
      <defs>
        <linearGradient id={id} x1="0" y1="0" x2="1" y2="1">
          <stop offset="0" stopColor={from} />
          <stop offset="1" stopColor={to} />
        </linearGradient>
      </defs>
      <text x="15" y="26" fontSize="34" fontWeight="800" textAnchor="middle" fill={`url(#${id})`}>R</text>
    </svg>
  );
}

const SMALL_TREE = [
  "639,505 650,484 669,471 690,468 713,477 728,494 733,516 728,537 716,551 704,560 687,562 669,560 651,548 639,527",
  "687,489 706,495 720,508 724,527 720,546 706,559 687,565 668,559 654,546 649,527 654,508 668,495",
];
const LARGE_TREE = [
  "809,427 836,432 858,447 872,469 877,494 872,520 858,541 843,552 824,563 798,563 777,553 762,542 747,520 742,494 747,469 762,446 784,432",
  "800,458 822,458 844,469 860,488 864,512 860,534 845,551 836,557 809,562 784,557 776,551 762,534 758,512 762,488 777,470",
];
const MEDIUM_TREE = [
  "918,456 944,456 965,468 980,486 985,508 980,533 965,549 944,562 918,562 898,550 882,533 878,508 882,486 898,467",
  "937,480 957,487 971,502 975,523 971,543 957,557 937,565 917,562 900,550 890,532 890,513 900,494 917,482",
];

function Plants({ points, shifts }) {
  return shifts.map((dx) => (
    <g key={dx} transform={`translate(${dx} 0)`} stroke="#2fdc2f">
      {points.map((p) => <polygon key={p} points={p} />)}
    </g>
  ));
}

function Drawing() {
  return (
    <svg shapeRendering="crispEdges" fill="none">
      <g transform="translate(-225.5 -191.5)">
        <path d="M336 190v820M550 190v820M535 633l30 30" stroke="#777" />
        <path d="M226 648h184M1867 648h34" stroke="#35dbe2" />
        <path d="M410 648h128" stroke="#111" />
        <path d="M538 648h71M1558 648h12" stroke="#777" />
        <path d="M1570 648h130" stroke="#d42a2a" />
        <path d="M1694 648h173" stroke="#111" />

        <text x="1623" y="647" fontFamily="'Liberation Sans', sans-serif" fontSize="78" fill="#000" stroke="#000">Section</text>
        <g fontFamily="Inter, sans-serif" fontWeight="200" fontSize="96" fill="#000">
          <text transform="translate(309 938) rotate(-90)">300</text>
          <text transform="translate(521 328) rotate(-90)">120</text>
        </g>

        <path d="M639 190v413M1529 190v413" stroke="#c233c8" />
        <path d="M677 286h813v13h-813z" stroke="#f0ee3c" />
        <path d="M1023 603V475h121v128M1016 567v36M1151 567v36M1016 648v68h135v-68" stroke="#b5255a" />

        {[643, 765, 887, 1185, 1307, 1429].map((x) => (
          <g key={x} transform={`translate(${x} 0)`}>
            <path d="M5 603L2 585H0V548h95v37h-2l-3 18" stroke="#b5255a" />
            <path d="M10 603L2 550h91l-8 53" stroke="#ee86a4" />
          </g>
        ))}
        <Plants points={SMALL_TREE} shifts={[0, 796]} />
        <Plants points={LARGE_TREE} shifts={[0, 549]} />
        <Plants points={MEDIUM_TREE} shifts={[0, 305]} />

        <path d="M609 603h949v13h-10v20h10v12H609v-12h11v-20h-11z" fill="#808080" />
        <path d="M609 603h949v13M609 603v13h949M620 616v20M1547 616v20M609 636h949v12H609z" stroke="#111" />
        <path d="M697 648h12M1200 648h10" stroke="#d22fd2" />

        <g stroke="#1f7a2a">
          <path d="M234 603h1667M234 616h1667M234 636h1667" strokeDasharray="30 30.6" />
          <path d="M378 648h1430" strokeDasharray="31 29.6" />
          <path d="M609 213v642M1558 213v642" strokeDasharray="30 30.6" />
          <path d="M1084 197v748" strokeDasharray="30 30.5" />
          <path d="M609 636v31M1558 636v31M609 819v36M1558 819v36" />
        </g>
      </g>
    </svg>
  );
}

function PropertiesPalette() {
  return (
    <Palette>
      <PaletteHeader>
        <PaletteTitle>Properties</PaletteTitle>
        <PlainButton aria-label="Close properties"><Icon name="closeBold" /></PlainButton>
      </PaletteHeader>
      <PaletteFrame>
        <TypePicker aria-label="Type selector">
          <TypeImage><RevitMark size={46} from="#8d8d8d" to="#c4c4c4" /></TypeImage>
          <Caret $color="#8c8c8c" />
        </TypePicker>
        <TypeRow>
          <SelectBox>
            <FamilySelect aria-label="Family" defaultValue="f">
              <option value="f">Family: Furniture</option>
            </FamilySelect>
            <svg width="9" height="6"><path d="M1 1l4 4 4-4" fill="none" stroke="#444" /></svg>
          </SelectBox>
          <EditType disabled>
            <svg width="16" height="16" fill="none" stroke="#aaa">
              <path d="M1 3l2-2h4v6H1zM9 3l2-2h4v4M1 11l2-2h4v6H1zM9 6h6v9H9zM11 9h2M11 12h2" />
            </svg>
            Edit Type
          </EditType>
        </TypeRow>
        <PropBody>
          {PROPERTY_GROUPS.map((group) => (
            <div key={group.title}>
              <GroupHeader>
                {group.title}
                <PlainButton aria-label={`Collapse ${group.title}`}><Icon name="collapse" /></PlainButton>
              </GroupHeader>
              {group.rows.map((row) => (
                <PropRow key={row.id} $dim={row.dim}>
                  <PropLabel htmlFor={row.id}>{row.label}</PropLabel>
                  <PropValue>
                    {row.check ? (
                      <Check id={row.id} type="checkbox" defaultChecked={row.checked} />
                    ) : (
                      <ValueInput id={row.id} defaultValue={row.value} $active={row.active} readOnly={row.dim} />
                    )}
                  </PropValue>
                </PropRow>
              ))}
            </div>
          ))}
        </PropBody>
        <PaletteFooter>
          <HelpLink href="#help">Properties help</HelpLink>
          <ApplyButton disabled>Apply</ApplyButton>
        </PaletteFooter>
      </PaletteFrame>
    </Palette>
  );
}

function ProjectBrowser() {
  return (
    <Palette $grow>
      <PaletteHeader>
        <PaletteTitle>Project Browser - BOX-01.rfa</PaletteTitle>
        <PlainButton aria-label="Close project browser"><Icon name="closeBold" /></PlainButton>
      </PaletteHeader>
      <PaletteFrame>
        <TreeList>
          {TREE.map((row, i) => (
            <TreeRow key={i}>
              {row.guides.map((g, n) => <Guide key={n} type={g} />)}
              {row.icon && <TreeIcon><Icon name={row.icon} /></TreeIcon>}
              <TreeLabel $gap={row.icon ? 0 : 4} $current={row.current}>{row.label}</TreeLabel>
            </TreeRow>
          ))}
        </TreeList>
      </PaletteFrame>
    </Palette>
  );
}

function RibbonPanels() {
  return (
    <Ribbon>
      <Panel $width={58}>
        <PanelBody $pad={3}>
          <BigButton $width={44} $top={6} $active><Icon name="cursor" />Modify</BigButton>
        </PanelBody>
        <PanelTitle>Select <Caret $large /></PanelTitle>
      </Panel>
      <Panel $width={83}>
        <PanelBody>
          <ToolGrid $cols={2} $cell={39} $row={35}>
            <Tool aria-label="Type properties"><Icon name="typeProps" /></Tool>
            <Tool aria-label="Family category"><Icon name="familyFolder" /></Tool>
            <Tool aria-label="Properties" $active><Icon name="properties" /></Tool>
            <Tool aria-label="Family types"><Icon name="familyTypes" /></Tool>
          </ToolGrid>
        </PanelBody>
        <PanelTitle>Properties</PanelTitle>
      </Panel>
      <Panel $width={80}>
        <PanelBody $gap={10} $pad={4}>
          <BigButton $width={36} $top={2} $dim disabled>
            <Icon name="paste" />Paste<Caret $color="#888" />
          </BigButton>
          <ToolGrid $cols={1} $cell={20} $row={24}>
            <Tool aria-label="Cut to clipboard"><Icon name="scissors" /></Tool>
            <Tool aria-label="Copy to clipboard"><Icon name="copyGrey" /></Tool>
            <Tool aria-label="Match type"><Icon name="matchType" /></Tool>
          </ToolGrid>
        </PanelBody>
        <PanelTitle>Clipboard</PanelTitle>
      </Panel>
      <Panel $width={108}>
        <PanelBody $gap={6} $pad={4}>
          <ToolGrid $cols={1} $cell={58} $row={24}>
            <TextTool><Icon name="cut" />Cut <Caret /></TextTool>
            <TextTool><Icon name="join" />Join <Caret /></TextTool>
          </ToolGrid>
          <ToolGrid $cols={1} $cell={34} $row={24}>
            <TextTool aria-label="Split face"><Icon name="splitFace" /></TextTool>
            <TextTool aria-label="Paint"><Icon name="paint" /><Caret /></TextTool>
          </ToolGrid>
        </PanelBody>
        <PanelTitle>Geometry</PanelTitle>
      </Panel>
      <Panel $width={238}>
        <PanelBody $gap={2}>
          <ToolGrid $cols={4} $cell={39} $row={36}>
            {MODIFY_LARGE.map((n) => (
              <Tool key={n} aria-label={n} $active={n === "trim"}><Icon name={n} /></Tool>
            ))}
          </ToolGrid>
          <ToolGrid $cols={3} $cell={25} $row={24}>
            {MODIFY_SMALL.map((n) => <Tool key={n} aria-label={n}><Icon name={n} /></Tool>)}
          </ToolGrid>
        </PanelBody>
        <PanelTitle>Modify</PanelTitle>
      </Panel>
      <Panel $width={56}>
        <PanelBody>
          <ToolGrid $cols={1} $cell={46} $row={36}>
            <BigTool aria-label="Measure"><Icon name="measure" /><Caret /></BigTool>
            <BigTool aria-label="Dimension"><Icon name="dimension" /><Caret /></BigTool>
          </ToolGrid>
        </PanelBody>
        <PanelTitle>Measure</PanelTitle>
      </Panel>
      <Panel $width={45}>
        <PanelBody>
          <ToolGrid $cols={1} $cell={40} $row={36}>
            <Tool aria-label="Create group"><Icon name="group" /></Tool>
            <Tool aria-label="Create similar"><Icon name="similar" /></Tool>
          </ToolGrid>
        </PanelBody>
        <PanelTitle>Create</PanelTitle>
      </Panel>
      <Panel $width={158}>
        <PanelBody>
          <BigButton $width={56}><Icon name="load" /><span>Load into<br />Project</span></BigButton>
          <BigButton $width={98}><Icon name="loadClose" /><span>Load into<br />Project and Close</span></BigButton>
        </PanelBody>
        <PanelTitle $accent>Family Editor</PanelTitle>
      </Panel>
    </Ribbon>
  );
}

function Chevron({ d }) {
  return <svg width="9" height="9"><path d={d} fill="none" stroke="#444" strokeWidth="2" /></svg>;
}

export default function App() {
  return (
    <Window>
      <GlobalStyle />
      <TitleBar>
        <AppButton aria-label="Application menu">
          <RevitMark size={26} from="#1b5f9e" to="#4aa3dc" />
          <Caret />
        </AppButton>
        <Title>{"Autodesk Revit 2017 -   BOX-01.rfa - Elevation: Front"}</Title>
        <InfoCenter>
          <InfoToggle aria-label="Toggle search"><RightArrow /></InfoToggle>
          <Search aria-label="Search" placeholder="Type a keyword or phrase" />
          {["binoculars", "dish", "star", "user"].map((n) => (
            <InfoButton key={n} aria-label={n}><Icon name={n} /></InfoButton>
          ))}
          <UserName>nagiabdelnou... <Caret /></UserName>
          <InfoButton aria-label="Exchange apps"><Icon name="exchange" /></InfoButton>
          <InfoHelp aria-label="Help"><Icon name="help" /><Caret /></InfoHelp>
        </InfoCenter>
        <WindowButtons>
          <WindowButton aria-label="Minimize"><Icon name="minimize" /></WindowButton>
          <WindowButton aria-label="Restore"><Icon name="restore" /></WindowButton>
          <WindowButton aria-label="Close"><Icon name="close" /></WindowButton>
        </WindowButtons>
      </TitleBar>

      <TabBar>
        {TABS.map((t) => <Tab key={t} $active={t === "Modify"}>{t}</Tab>)}
        <RibbonToggle aria-label="Minimize ribbon"><TogglePill /><Caret $color="#222" /></RibbonToggle>
      </TabBar>
      <RibbonPanels />

      <QuickBar>
        {QUICK.map((n, i) => {
          if (n === "sep") return <QuickSep key={i} />;
          if (n.startsWith("caret")) {
            return <QuickCaret key={i} aria-label="More"><Caret $color={n === "caretDim" ? "#999" : "#444"} /></QuickCaret>;
          }
          return <QuickButton key={i} aria-label={n} $active={n === "thinLines"}><Icon name={n} /></QuickButton>;
        })}
        <QuickCaret aria-label="Customize toolbar"><Icon name="customize" /></QuickCaret>
      </QuickBar>
      <OptionsBar />

      <Workspace>
        <Sidebar>
          <PropertiesPalette />
          <ProjectBrowser />
        </Sidebar>
        <ViewFrame>
          <Canvas>
            <Drawing />
            <ViewButtons>
              <ViewButton aria-label="Minimize view"><Icon name="viewMin" /></ViewButton>
              <ViewButton aria-label="Restore view"><Icon name="viewRestore" /></ViewButton>
              <ViewButton aria-label="Close view"><Icon name="viewClose" /></ViewButton>
            </ViewButtons>
            <NavBar>
              <NavCorner aria-label="Close navigation bar"><Icon name="navClose" /></NavCorner>
              <NavTool $height={46} $line aria-label="Steering wheel"><Icon name="wheel" /><Caret $color="#8a8a8a" /></NavTool>
              <NavTool $height={42} aria-label="Zoom in region"><Icon name="zoomRegion" /><Caret $color="#8a8a8a" /></NavTool>
              <NavCorner $last aria-label="Navigation options"><Icon name="navMenu" /></NavCorner>
            </NavBar>
          </Canvas>
          <VScroll>
            <ScrollButton aria-label="Scroll up"><Chevron d="M1 7l4-4 4 4" /></ScrollButton>
            <Track $grow={1} />
            <VThumb />
            <Track $grow={1} />
            <ScrollButton aria-label="Scroll down"><Chevron d="M1 2l4 4 4-4" /></ScrollButton>
          </VScroll>
          <HScroll>
            <ScaleButton>1 : 20</ScaleButton>
            {VIEW_TOOLS.map((n) => <ViewTool key={n} aria-label={n}><Icon name={n} /></ViewTool>)}
            <ScrollButton aria-label="Scroll left"><Chevron d="M6 1L2 5l4 4" /></ScrollButton>
            <Track $grow={1} />
            <HThumb />
            <Track $grow={1} />
            <ScrollButton aria-label="Scroll right"><Chevron d="M3 1l4 4-4 4" /></ScrollButton>
          </HScroll>
          <Grip>
            <svg width="9" height="9" fill="#b5b5b5">
              <path d="M6 0h2v2H6zM3 3h2v2H3zM6 3h2v2H6zM0 6h2v2H0zM3 6h2v2H3zM6 6h2v2H6z" />
            </svg>
          </Grip>
        </ViewFrame>
      </Workspace>

      <StatusBar>
        <StatusText>Click to select, TAB for alternates, CTRL adds, SHIFT unselects.</StatusText>
        {STATUS_TOOLS.map((n) => <StatusTool key={n} aria-label={n}><Icon name={n} /></StatusTool>)}
        <StatusTool $flat aria-label="Filter"><Icon name="filter" /></StatusTool>
        <span>:0</span>
      </StatusBar>
    </Window>
  );
}
